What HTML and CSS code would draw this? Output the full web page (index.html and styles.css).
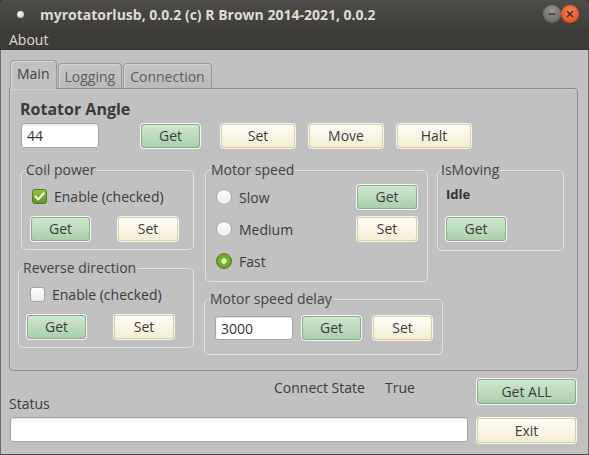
FILE: index.html
```html
<!DOCTYPE html>
<html>
<head>
<meta charset="utf-8">
<link rel="stylesheet" href="styles.css">
</head>
<body>
<div class="window">
  <div class="titlebar">
    <span class="appdot"></span>
    <span class="title">myrotatorlusb, 0.0.2 (c) R Brown 2014-2021, 0.0.2</span>
    <span class="wbtns">
      <span class="wbtn wmin"><svg width="18" height="18" viewBox="0 0 18 18"><path d="M5.5 9h7" stroke="#3a3a38" stroke-width="1.6"/></svg></span>
      <span class="wbtn wclose"><svg width="18" height="18" viewBox="0 0 18 18"><path d="M6 6l6 6M12 6l-6 6" stroke="#3a2a20" stroke-width="1.5"/></svg></span>
    </span>
  </div>
  <div class="menubar"><span class="menuitem">About</span></div>
  <div class="client">
    <div class="tabs">
      <div class="tab active">Main</div>
      <div class="tab">Logging</div>
      <div class="tab">Connection</div>
    </div>
    <div class="pane">
      <div class="heading">Rotator Angle</div>
      <div class="anglerow">
        <input class="entry angle" value="44">
        <button class="btn get w59 ml-get">Get</button>
        <button class="btn set w74 ml-set">Set</button>
        <button class="btn set w74 ml-move">Move</button>
        <button class="btn set w74 ml-halt">Halt</button>
      </div>
      <div class="groups">
        <div class="col col1">
          <fieldset class="grp coil">
            <legend>Coil power</legend>
            <label class="checkrow"><span class="cb checked"><svg width="15" height="15" viewBox="0 0 15 15"><path d="M3.6 7.6l2.7 2.8 5.2-6" fill="none" stroke="#fff" stroke-width="2.1" stroke-linecap="round" stroke-linejoin="round"/></svg></span>Enable (checked)</label>
            <div class="btnrow">
              <button class="btn get w59">Get</button>
              <button class="btn set w60 ml28">Set</button>
            </div>
          </fieldset>
          <fieldset class="grp reverse">
            <legend>Reverse direction</legend>
            <label class="checkrow"><span class="cb"></span>Enable (checked)</label>
            <div class="btnrow">
              <button class="btn get w59">Get</button>
              <button class="btn set w60 ml28">Set</button>
            </div>
          </fieldset>
        </div>
        <div class="col col2">
          <fieldset class="grp speed">
            <legend>Motor speed</legend>
            <div class="speedgrid">
              <label class="radiorow"><span class="rb"></span>Slow</label>
              <button class="btn get w60">Get</button>
              <label class="radiorow"><span class="rb"></span>Medium</label>
              <button class="btn set w60">Set</button>
              <label class="radiorow"><span class="rb on"></span>Fast</label>
              <span></span>
            </div>
          </fieldset>
          <fieldset class="grp delay">
            <legend>Motor speed delay</legend>
            <div class="delayrow">
              <input class="entry delayentry" value="3000">
              <button class="btn get w60 ml9">Get</button>
              <button class="btn set w60 ml12">Set</button>
            </div>
          </fieldset>
        </div>
        <div class="col col3">
          <fieldset class="grp moving">
            <legend>IsMoving</legend>
            <div class="idle">Idle</div>
            <button class="btn get w60">Get</button>
          </fieldset>
        </div>
      </div>
    </div>
    <div class="footer">
      <div class="footleft">
        <div class="connect"><span class="connlabel">Connect State</span><span>True</span></div>
        <div class="statuslabel">Status</div>
        <input class="entry status" value="">
      </div>
      <div class="footright">
        <button class="btn get wide">Get ALL</button>
        <button class="btn set wide">Exit</button>
      </div>
    </div>
  </div>
</div>
</body>
</html>
```
FILE: styles.css
```css
* { box-sizing: border-box; }
html, body { margin: 0; padding: 0; }
body {
  width: 589px;
  height: 455px;
  overflow: hidden;
  font-family: "Open Sans", "Noto Sans", sans-serif;
  font-size: 14px;
  color: #3c3c3c;
  background: #3c3b37;
}
.window {
  width: 589px;
  height: 455px;
  display: flex;
  flex-direction: column;
}
.titlebar {
  height: 28px;
  flex: none;
  display: flex;
  align-items: center;
  background: linear-gradient(#4e4d49, #3f3e3a);
  color: #dfdbd2;
  font-weight: bold;
  font-size: 14px;
  border-radius: 5px 5px 0 0;
}
.appdot {
  width: 7px;
  height: 7px;
  border-radius: 50%;
  background: radial-gradient(circle at 40% 35%, #ffffff, #cfcfcf 60%, #9a9a9a);
  margin-left: 17px;
  margin-right: 16px;
}
.title { flex: 1; white-space: nowrap; }
.wbtns { display: flex; margin-right: 10px; }
.wbtn {
  width: 18px;
  height: 18px;
  border-radius: 50%;
  display: block;
}
.wbtn svg { display: block; }
.wmin { background: radial-gradient(circle at 50% 35%, #9a9996, #6e6d69 70%, #55544f); }
.wclose { background: radial-gradient(circle at 50% 35%, #f8855a, #e8531f 70%, #c43f12); }
.menubar {
  height: 22px;
  flex: none;
  background: #3c3b37;
  color: #dfdbd2;
  padding-left: 9px;
  display: flex;
  align-items: center;
  font-size: 14px;
}
.client {
  flex: 1;
  background: #c1c1c1;
  border-left: 1px solid #6b6b6b;
  border-right: 1px solid #6b6b6b;
  border-bottom: 1px solid #4a4a4a;
  padding-top: 10px;
  display: flex;
  flex-direction: column;
}
.tabs {
  display: flex;
  align-items: flex-end;
  padding-left: 9px;
  height: 29px;
  position: relative;
  z-index: 2;
  margin-bottom: -1px;
}
.tab {
  height: 25px;
  margin-bottom: 1px;
  border: 1px solid #989898;
  border-bottom: none;
  border-radius: 4px 4px 0 0;
  background: linear-gradient(#c6c6c6, #b9b9b9);
  color: #5e5e5e;
  padding: 0 6px;
  display: flex;
  align-items: center;
  margin-right: 1px;
  box-shadow: inset 1px 1px 0 #d4d4d4;
}
.tab.active {
  height: 29px;
  margin-bottom: 0;
  background: #c1c1c1;
  color: #444;
  padding-bottom: 4px;
  box-shadow: inset 1px 1px 0 #dadada;
}
.pane {
  margin-left: 8px;
  width: 569px;
  height: 283px;
  border: 1px solid #8c8c8c;
  border-radius: 0 4px 4px 4px;
  padding: 10px 8px 0 10px;
  box-shadow: inset 1px 1px 0 #cfcfcf;
}
.heading {
  font-weight: bold;
  font-size: 16px;
  line-height: 20px;
  color: #3a3a3a;
}
.anglerow {
  display: flex;
  align-items: center;
  margin-top: 4px;
  height: 25px;
}
.entry {
  font-family: inherit;
  font-size: 14px;
  color: #333;
  background: #fff;
  border: 1px solid #a6a6a6;
  border-radius: 3px;
  padding: 0 0 0 5px;
  box-shadow: inset 0 1px 1px rgba(0,0,0,0.12);
  outline: none;
}
.angle { width: 78px; height: 25px; margin-left: 1px; }
.btn {
  font-family: inherit;
  font-size: 14px;
  color: #3c3c3c;
  height: 24px;
  padding: 0;
  border-radius: 3px;
  box-shadow: 0 0 0 1px rgba(255,255,255,0.85);
  line-height: 22px;
  cursor: default;
}
.btn.get {
  background: linear-gradient(#cfe7cf, #a9d0aa);
  border: 1px solid #88ad88;
}
.btn.set {
  background: linear-gradient(#fffef8, #f5edd2);
  border: 1px solid #d7d19c;
}
.w59 { width: 59px; }
.w60 { width: 60px; }
.w74 { width: 74px; }
.ml-get { margin-left: 42px; }
.ml-set { margin-left: 21px; }
.ml-move { margin-left: 14px; }
.ml-halt { margin-left: 14px; }
.ml28 { margin-left: 28px; }
.ml9 { margin-left: 9px; }
.ml12 { margin-left: 12px; }

.groups {
  display: flex;
  margin-top: 14px;
  margin-left: -2px;
  align-items: flex-start;
}
.col { display: flex; flex-direction: column; }
.col1 { width: 176px; }
.col2 { width: 239px; margin-left: 10px; }
.col3 { width: 127px; margin-left: -6px; }

.grp {
  margin: 0;
  border: 1px solid #e3e3e3;
  border-radius: 5px;
  padding: 0 10px 0 9px;
  min-width: 0;
  box-shadow: inset 1px 1px 0 rgba(0,0,0,0.04);
}
.grp legend {
  padding: 0 1px 0 0;
  margin-left: -5px;
  font-size: 14px;
  line-height: 16px;
  color: #444;
}
.coil { margin-left: 3px; width: 173px; height: 88px; }
.reverse { margin-top: 10px; width: 176px; height: 88px; padding-left: 8px; }
.reverse legend { margin-left: -4px; }
.checkrow {
  display: flex;
  align-items: center;
  height: 19px;
  margin-top: 9px;
  margin-left: 1px;
  white-space: nowrap;
}
.reverse .checkrow { margin-left: 3px; }
.cb {
  width: 15px;
  height: 15px;
  border-radius: 3px;
  margin-right: 7px;
  background: linear-gradient(#ffffff, #ececec);
  border: 1px solid #a3a3a3;
  flex: none;
}
.cb.checked {
  background: linear-gradient(#93c23f, #5f9b19);
  border: 1px solid #4f7f14;
}
.cb svg { display: block; margin: -1px 0 0 -1px; }
.btnrow { display: flex; margin-top: 11px; }

.speed { margin-left: 1px; width: 223px; height: 120px; padding-left: 10px; }
.speedgrid {
  display: grid;
  grid-template-columns: 1fr 60px;
  grid-auto-rows: 24px;
  row-gap: 8px;
  margin-top: 7px;
  align-items: center;
}
.radiorow { display: flex; align-items: center; }
.rb {
  width: 16px;
  height: 16px;
  border-radius: 50%;
  margin-right: 7px;
  background: linear-gradient(#ffffff, #ebebeb);
  border: 1px solid #a8a8a8;
  flex: none;
}
.rb.on {
  background: radial-gradient(circle, #eef7dc 0 2.3px, #7fb52e 3px, #5d9918 100%);
  border: 1px solid #4f7f14;
}
.delay { margin-top: 9px; width: 239px; height: 64px; padding-left: 10px; }
.delayrow { display: flex; align-items: center; margin-top: 9px; }
.delayentry { width: 78px; height: 24px; }

.moving { width: 127px; height: 89px; padding-left: 8px; }
.idle {
  font-weight: bold;
  font-size: 13px;
  line-height: 16px;
  margin-top: 8px;
  color: #333;
}
.moving .btn { margin-top: 15px; }

.footer {
  display: grid;
  grid-template-columns: 458px 99px;
  column-gap: 10px;
  padding-left: 8px;
  margin-top: 8px;
}
.footleft { display: flex; flex-direction: column; }
.connect {
  line-height: 18px;
  padding-left: 265px;
  display: flex;
}
.connlabel { width: 111px; }
.statuslabel { line-height: 18px; margin-top: -2px; }
.status { width: 458px; height: 25px; margin-left: 1px; margin-top: 4px; }
.footright { display: flex; flex-direction: column; }
.wide { width: 99px; height: 25px; }
.footright .set { margin-top: 14px; }
```
